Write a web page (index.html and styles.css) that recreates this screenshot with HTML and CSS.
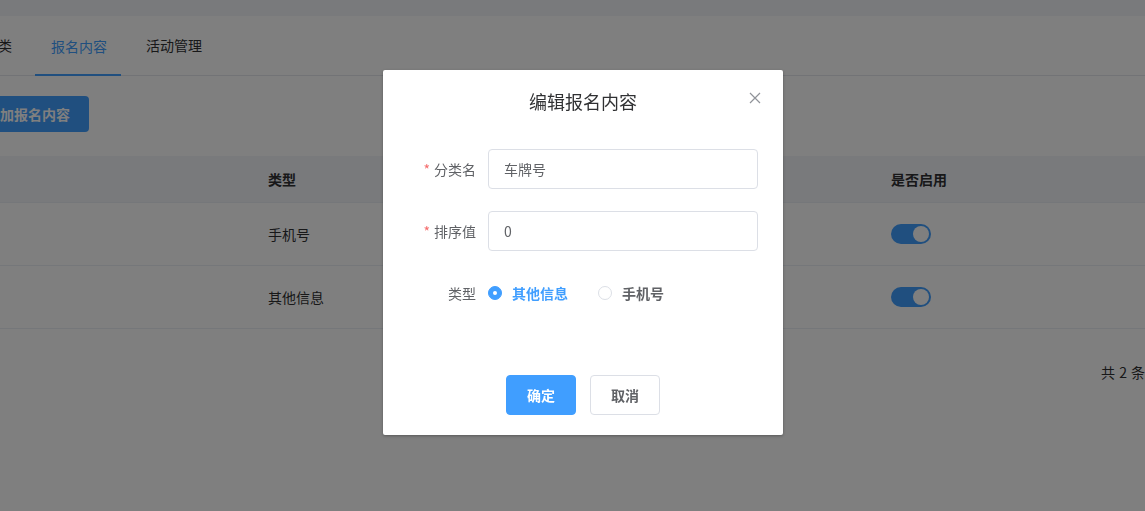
FILE: index.html
```html
<!DOCTYPE html>
<html lang="zh-CN">
  <head>
    <meta charset="UTF-8" />
    <title>编辑报名内容</title>
    <link rel="stylesheet" href="styles.css">
  </head>
  <body>
    <div class="topbar"></div>

    <div class="page">
      <!-- Tabs -->
      <div class="tabs">
        <div class="tab">报名分类</div>
        <div class="tab active">报名内容</div>
        <div class="tab">活动管理</div>
      </div>

      <div class="toolbar">
        <button class="btn-primary">添加报名内容</button>
      </div>

      <!-- Table -->
      <div class="table">
        <div class="row head">
          <div class="cell c-name"></div>
          <div class="cell c-type">类型</div>
          <div class="cell c-sort"></div>
          <div class="cell c-on">是否启用</div>
        </div>
        <div class="row">
          <div class="cell c-name"></div>
          <div class="cell c-type">手机号</div>
          <div class="cell c-sort"></div>
          <div class="cell c-on"><span class="switch"></span></div>
        </div>
        <div class="row">
          <div class="cell c-name"></div>
          <div class="cell c-type">其他信息</div>
          <div class="cell c-sort"></div>
          <div class="cell c-on"><span class="switch"></span></div>
        </div>
      </div>

      <div class="pager">共 <span class="num">2</span> 条</div>
    </div>

    <div class="mask"></div>

    <!-- Dialog -->
    <div class="dialog">
      <div class="dialog-header">
        <span class="dialog-title">编辑报名内容</span>
        <span class="dialog-close">
          <svg width="12" height="12" viewBox="0 0 12 12">
            <path d="M1 1L11 11M11 1L1 11" stroke="#909399" stroke-width="1.2" fill="none" />
          </svg>
        </span>
      </div>
      <div class="dialog-body">
        <div class="form-item">
          <label class="form-label"><i class="req">*</i>分类名</label>
          <div class="input">车牌号</div>
        </div>
        <div class="form-item">
          <label class="form-label"><i class="req">*</i>排序值</label>
          <div class="input">0</div>
        </div>
        <div class="form-item">
          <label class="form-label">类型</label>
          <div class="radios">
            <span class="radio checked"><span class="radio-dot"></span>其他信息</span>
            <span class="radio"><span class="radio-dot"></span>手机号</span>
          </div>
        </div>
      </div>
      <div class="dialog-footer">
        <button class="btn btn-ok">确定</button>
        <button class="btn btn-cancel">取消</button>
      </div>
    </div>
  </body>
</html>
```

FILE: styles.css
```css
body {
  margin: 0;
  font-family: "Noto Sans CJK SC", "Noto Sans", sans-serif;
  font-size: 14px;
  color: #303133;
  background: #fff;
  width: 1145px;
  height: 511px;
  overflow: hidden;
}

.topbar {
  height: 16px;
  background: #f2f4f8;
}

.page {
  margin-left: -60px;
}

.tabs {
  display: flex;
  height: 59px;
  border-bottom: 1px solid #e4e7ed;
}

.tab {
  line-height: 59px;
  padding: 0 16px;
  margin-right: 7px;
  color: #303133;
  box-sizing: border-box;
}

.tab.active {
  color: #409eff;
  border-bottom: 2px solid #409eff;
  height: 60px;
  line-height: 61px;
  padding: 0 14px 0 16px;
  margin-right: 9px;
}

.toolbar {
  padding: 20px 0 0 60px;
}

.btn-primary {
  height: 36px;
  padding: 0 19px 0 20px;
  margin-left: -34px;
  background: #409eff;
  color: #fff;
  border: none;
  border-radius: 4px;
  font-family: inherit;
  font-size: 14px;
  font-weight: bold;
}

.table {
  margin-top: 24px;
  width: 1300px;
}

.row {
  display: flex;
  height: 63px;
  align-items: center;
  border-bottom: 1px solid #ebeef5;
  box-sizing: border-box;
}

.row.head {
  height: 47px;
  background: #f2f4f8;
  font-weight: bold;
}

.cell {
  color: #303133;
}

.c-name {
  width: 328px;
}

.c-type {
  width: 311px;
}

.c-sort {
  width: 312px;
}

.c-on {
  width: 200px;
}

.switch {
  display: block;
  position: relative;
  width: 40px;
  height: 20px;
  border-radius: 10px;
  background: #409eff;
}

.switch::after {
  content: "";
  position: absolute;
  right: 2px;
  top: 2px;
  width: 16px;
  height: 16px;
  border-radius: 50%;
  background: #fff;
}

.pager {
  margin-top: 33px;
  padding-left: 1161px;
  white-space: nowrap;
  color: #303133;
}

.pager .num {
  padding: 0 1px;
}

.mask {
  position: fixed;
  inset: 0;
  background: rgba(0, 0, 0, 0.5);
}

.dialog {
  position: absolute;
  left: 383px;
  top: 70px;
  width: 400px;
  background: #fff;
  border-radius: 2px;
  box-shadow: 0 1px 3px rgba(0, 0, 0, 0.3);
}

.dialog-header {
  position: relative;
  padding: 19px 20px 10px;
  text-align: center;
}

.dialog-title {
  font-size: 18px;
  line-height: 24px;
  color: #303133;
}

.dialog-close {
  position: absolute;
  top: 22px;
  right: 22px;
  width: 12px;
  height: 12px;
  display: flex;
}

.dialog-body {
  padding: 26px 25px 30px 20px;
}

.form-item {
  display: flex;
  align-items: center;
  margin-bottom: 22px;
}

.form-label {
  width: 85px;
  padding-right: 12px;
  box-sizing: border-box;
  text-align: right;
  color: #606266;
  line-height: 40px;
}

.req {
  font-style: normal;
  color: #f56c6c;
  margin-right: 4px;
}

.input {
  flex: 1;
  height: 40px;
  line-height: 38px;
  border: 1px solid #dcdfe6;
  border-radius: 4px;
  padding: 0 15px;
  box-sizing: border-box;
  color: #606266;
}

.radios {
  display: flex;
  height: 40px;
  align-items: center;
}

.radio {
  display: flex;
  align-items: center;
  margin-right: 30px;
  color: #606266;
  font-weight: bold;
}

.radio-dot {
  width: 12px;
  height: 12px;
  border: 1px solid #dcdfe6;
  border-radius: 50%;
  margin-right: 10px;
  position: relative;
}

.radio.checked {
  color: #409eff;
}

.radio.checked .radio-dot {
  background: #409eff;
  border-color: #409eff;
}

.radio.checked .radio-dot::after {
  content: "";
  position: absolute;
  left: 4px;
  top: 4px;
  width: 4px;
  height: 4px;
  border-radius: 50%;
  background: #fff;
}

.dialog-footer {
  display: flex;
  justify-content: center;
  gap: 14px;
  padding: 10px 20px 20px;
}

.btn {
  width: 70px;
  height: 40px;
  border-radius: 4px;
  font-family: inherit;
  font-size: 14px;
  font-weight: bold;
}

.btn-ok {
  background: #409eff;
  border: 1px solid #409eff;
  color: #fff;
}

.btn-cancel {
  background: #fff;
  border: 1px solid #dcdfe6;
  color: #606266;
}
```
